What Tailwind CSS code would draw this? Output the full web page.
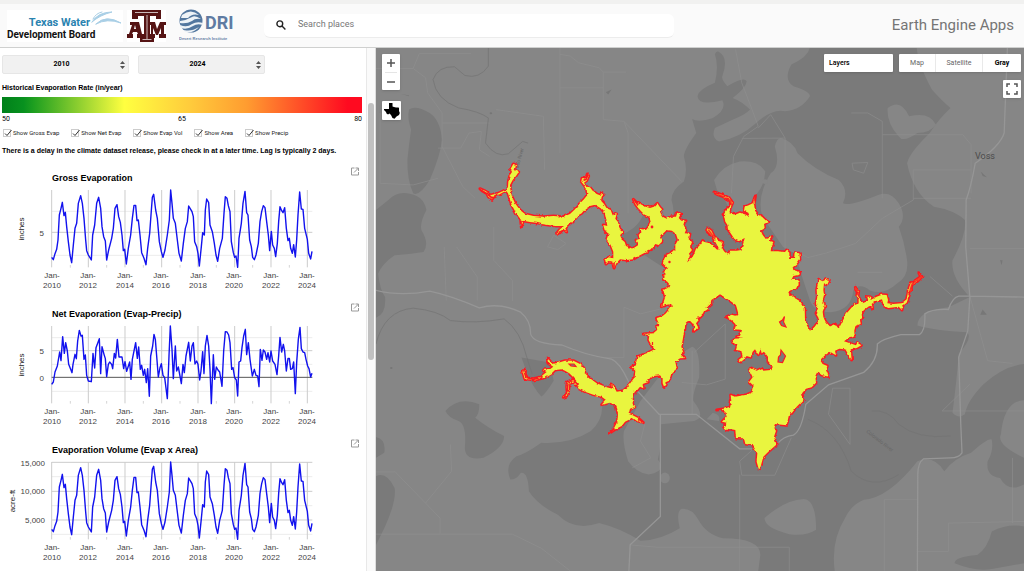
<!DOCTYPE html>
<html lang="en">
<head>
<meta charset="utf-8">
<title>Reservoir Evaporation</title>
<script src="https://cdn.jsdelivr.net/npm/@tailwindcss/browser@4"></script>
</head>
<body class="h-screen flex flex-col overflow-hidden bg-white font-[Roboto,sans-serif] text-black">
<header class="shrink-0 h-12 flex items-center bg-[#fafafa] border-t-4 border-b border-t-[#f1f1f0] border-b-[#cfd0cf]">
  <div class="flex items-center w-64 shrink-0 pl-[7px]">
    <svg class="w-[116px] h-8" viewBox="0 0 116 32" role="img" aria-label="Texas Water Development Board">
      <rect width="116" height="32" fill="#fff"/>
      <g fill="none" stroke="#a9cfe6" stroke-linecap="round"><path d="M85 12Q91 2 105 2Q93 5 85 12" fill="#a9cfe6"/><path d="M89 14Q99 4 114 13Q100 8 89 14" fill="#a9cfe6"/><path d="M86 9Q89 3 95 2" stroke-width="1"/></g>
      <text x="83" y="16" text-anchor="end" class="font-bold text-[11px] font-[Roboto,sans-serif]" fill="#2a83b0">Texas Water</text>
      <text x="0" y="28" class="font-bold text-[10px] font-[Roboto,sans-serif]" fill="#111">Development Board</text>
    </svg>
    <svg class="w-[39px] h-8 ml-1" viewBox="0 0 39 32" role="img" aria-label="Texas A&amp;M">
      <rect width="39" height="32" fill="#fff"/>
      <g fill="#551414"><path d="M5 0H34V9H29V6H23V27H27V32H13V27H17V6H11V9H5Z"/><path fill-rule="evenodd" d="M3 12H12L15 24H17V28H10V24H11L10 22H6L5 24H6V28H0V24H2L5 15H3ZM8 15L7 19H9Z"/><path d="M22 12H28L30 19L33 12H39V15H37V24H39V28H32V24H34V18L31 25H29L26 18V24H28V28H22V24H24V15H22Z"/></g>
      <path d="M8 2.500H31M20 5V29M15.500 29.500H24.500" stroke="#fff" stroke-width=".7" fill="none"/>
    </svg>
    <svg class="w-[56px] h-[34px] ml-[13px]" viewBox="0 0 56 34" role="img" aria-label="DRI Desert Research Institute">
      <circle cx="12" cy="12" r="11.500" fill="#53779f"/>
      <path d="M3 6Q12 -1 20 6Q13 4 9 9Q5 9 2 9ZM1 12Q8 11 13 8Q16 6 22 10Q16 9 13 12Q8 15 1 14ZM1 16Q8 19 13 15Q18 12 24 14V16Q18 14 14 17Q8 21 2 19ZM5 21Q12 23 20 18Q14 25 6 23Z" fill="#eef3f7"/>
      <text x="26" y="20" class="font-bold text-[18px] font-[Roboto,sans-serif]" fill="#5f7ba2">DRI</text>
      <text x="0" y="31" class="font-bold text-[4px] font-['Liberation_Sans',sans-serif]" fill="#6883a8">Desert Research Institute</text>
    </svg>
  </div>
  <label class="flex items-center h-6 ml-2 pl-3 w-[410px] rounded-md bg-white border-b border-[#ececec]">
    <svg class="size-[10px] shrink-0" viewBox="0 0 10 10" fill="none" stroke="#222" stroke-width="1.400"><circle cx="3.800" cy="3.800" r="2.900"/><path d="M6 6L9.400 9.400"/></svg>
    <input type="search" aria-label="Search places" placeholder="Search places" class="ml-3 w-full bg-transparent outline-none text-[9px] placeholder:text-[#777]">
  </label>
  <div class="ml-auto pr-[10px] text-[15px] text-[#757575]">Earth Engine Apps</div>
</header>

<main class="flex flex-1 min-h-0">
  <aside class="flex shrink-0 w-[376px] border-r border-[#ddd]">
    <div class="flex-1 min-w-0 overflow-hidden">
      <div class="px-[2px] pt-[7px] h-28">
        <div class="flex gap-[9px]">
          <div class="relative"><select aria-label="Start year" class="appearance-none block w-[127px] h-[19px] rounded-xs border border-[#e6e6e6] bg-[#f1f1f1] text-[7px] font-bold text-center [text-align-last:center] pr-2"><option>2010</option></select><svg class="absolute right-1 top-[6px] w-[5px] h-2 pointer-events-none" viewBox="0 0 5 8" fill="#555"><path d="M0 3L2.500 0L5 3ZM0 5L2.500 8L5 5Z"/></svg></div>
          <div class="relative"><select aria-label="End year" class="appearance-none block w-[127px] h-[19px] rounded-xs border border-[#e6e6e6] bg-[#f1f1f1] text-[7px] font-bold text-center [text-align-last:center] pr-2"><option>2024</option></select><svg class="absolute right-1 top-[6px] w-[5px] h-2 pointer-events-none" viewBox="0 0 5 8" fill="#555"><path d="M0 3L2.500 0L5 3ZM0 5L2.500 8L5 5Z"/></svg></div>
        </div>
        <h2 class="mt-[9px] text-[7px] leading-[10px] font-bold font-['Liberation_Sans',sans-serif]">Historical Evaporation Rate (in/year)</h2>
        <div class="mt-1 mr-[2px] h-4 bg-[linear-gradient(90deg,#00801a_0%,#08911f_6%,#20a020_9%,#ffff40_34%,#ffcc3c_52%,#ff9c30_68%,#ff0a20_96%,#ff0a20_100%)]"></div>
        <div class="mt-[2px] mr-[2px] flex justify-between text-[7px] leading-2"><span>50</span><span>65</span><span>80</span></div>
        <div class="mt-[5px] ml-px flex gap-3 text-[6px] leading-[10px] text-[#222] whitespace-nowrap">
          <label class="flex items-center gap-[2px]"><input type="checkbox" checked class="appearance-none size-2 border border-[#ccc]"><svg class="absolute size-[9px]" viewBox="0 0 9 9" fill="none" stroke="#333"><path d="M2 4.500L4 6.500L8.500 1"/></svg>Show Gross Evap</label>
          <label class="flex items-center gap-[2px]"><input type="checkbox" checked class="appearance-none size-2 border border-[#ccc]"><svg class="absolute size-[9px]" viewBox="0 0 9 9" fill="none" stroke="#333"><path d="M2 4.500L4 6.500L8.500 1"/></svg>Show Net Evap</label>
          <label class="flex items-center gap-[2px]"><input type="checkbox" checked class="appearance-none size-2 border border-[#ccc]"><svg class="absolute size-[9px]" viewBox="0 0 9 9" fill="none" stroke="#333"><path d="M2 4.500L4 6.500L8.500 1"/></svg>Show Evap Vol</label>
          <label class="flex items-center gap-[2px]"><input type="checkbox" checked class="appearance-none size-2 border border-[#ccc]"><svg class="absolute size-[9px]" viewBox="0 0 9 9" fill="none" stroke="#333"><path d="M2 4.500L4 6.500L8.500 1"/></svg>Show Area</label>
          <label class="flex items-center gap-[2px]"><input type="checkbox" checked class="appearance-none size-2 border border-[#ccc]"><svg class="absolute size-[9px]" viewBox="0 0 9 9" fill="none" stroke="#333"><path d="M2 4.500L4 6.500L8.500 1"/></svg>Show Precip</label>
        </div>
        <p class="mt-2 text-[7px] leading-[10px] font-bold whitespace-nowrap font-['Liberation_Sans',sans-serif]">There is a delay in the climate dataset release, please check in at a later time. Lag is typically 2 days.</p>
      </div>

      <svg class="block w-[366px] h-[136px] font-['Liberation_Sans',sans-serif]" viewBox="0 0 366 136" role="img" aria-label="Gross Evaporation">
        <defs>
          <g id="years" fill="none"><path d="M155 90V322M265 90V322M375 90V322M485 90V322M594 90V322M704 90V322M813 90V322M922 90V322" stroke="#ccc" stroke-width="3"/><path d="M211 315V323M320 315V323M430 315V323M540 315V323M649 315V323M758 315V323M868 315V323" stroke="#d5d5d5" stroke-width="3"/></g>
          <g id="ticks" class="text-[8px]" fill="#444" text-anchor="middle"><text x="52" y="118">Jan-</text><text x="52" y="128">2010</text><text x="88" y="118">Jan-</text><text x="88" y="128">2012</text><text x="125" y="118">Jan-</text><text x="125" y="128">2014</text><text x="161" y="118">Jan-</text><text x="161" y="128">2016</text><text x="198" y="118">Jan-</text><text x="198" y="128">2018</text><text x="234" y="118">Jan-</text><text x="234" y="128">2020</text><text x="271" y="118">Jan-</text><text x="271" y="128">2022</text><text x="307" y="118">Jan-</text><text x="307" y="128">2024</text></g>
          <g id="popout" fill="none" stroke="#999" stroke-width="1"><path d="M354.500 8H351.500V15H358.500V12M355.500 8H358.500V11M358.500 8L354 12.500"/></g>
          <polyline id="evap" fill="none" stroke="#1212ee" stroke-width="4.200" stroke-linejoin="round" points="155,292 160,299 165,281 170,268 174,240 178,165 183,145 187,127 192,167 196,157 200,200 205,245 210,285 215,308 220,255 225,205 230,190 235,130 242,107 247,130 252,175 257,240 260,272 265,285 270,293 274,300 278,225 284,195 290,130 296,112 302,145 306,200 311,230 316,243 320,300 326,270 335,235 340,205 345,145 351,134 356,170 361,187 366,225 370,272 374,268 379,312 385,265 392,225 397,175 402,136 407,136 411,182 415,180 420,225 425,278 432,295 438,314 443,265 449,220 453,165 457,112 461,103 467,150 472,175 478,245 484,275 489,292 495,270 502,225 508,180 512,90 516,130 520,175 526,190 532,240 537,280 544,303 550,250 556,205 562,185 566,138 572,148 576,155 580,170 584,245 590,260 594,280 598,318 604,260 608,218 613,225 616,150 620,117 626,128 630,195 637,215 643,250 648,285 653,304 659,265 667,235 672,160 676,110 681,115 685,137 690,155 694,245 700,278 704,292 708,288 713,322 717,235 724,190 729,130 735,94 740,158 744,165 749,240 754,260 758,292 763,299 768,285 775,250 780,185 785,155 790,137 795,143 800,185 805,225 809,272 814,214 818,255 823,265 827,290 832,250 836,185 840,140 845,152 849,158 854,143 859,205 864,242 868,235 872,265 877,280 881,254 886,291 890,240 894,165 899,96 904,147 909,148 914,205 922,238 926,280 932,297 936,274"/>
        </defs>
        <use href="#popout"/>
        <text x="52" y="21" class="text-[9px] font-bold">Gross Evaporation</text>
        <g transform="scale(.33333)"><path d="M155 154H937M155 286H937" stroke="#ececec" stroke-width="3"/><path d="M155 217H937" stroke="#ccc" stroke-width="3"/><use href="#years"/><use href="#evap"/></g>
        <text x="44" y="76" text-anchor="end" class="text-[8px]" fill="#444">5</text>
        <text transform="translate(24 69) rotate(-90)" text-anchor="middle" class="text-[8px]" fill="#222">inches</text>
        <use href="#ticks"/>
      </svg>
      <svg class="block w-[366px] h-[136px] font-['Liberation_Sans',sans-serif]" viewBox="0 0 366 136" role="img" aria-label="Net Evaporation">
        <use href="#popout"/>
        <text x="52" y="21" class="text-[9px] font-bold">Net Evaporation (Evap-Precip)</text>
        <g transform="scale(.33333)"><path d="M155 125H937M155 205H937M155 286H937" stroke="#ececec" stroke-width="3"/><path d="M155 164H937" stroke="#ccc" stroke-width="3"/><use href="#years"/><path d="M155 244H937" stroke="#555" stroke-width="3"/>
        <polyline fill="none" stroke="#1212ee" stroke-width="4.200" stroke-linejoin="round" points="155,265 160,258 165,228 172,210 179,168 183,194 188,122 193,172 197,140 202,165 206,205 212,220 216,230 219,205 225,175 229,188 233,135 238,103 243,120 247,118 252,190 256,177 260,238 265,255 274,257 279,172 284,216 288,155 298,128 302,233 306,152 312,175 316,188 320,242 325,205 329,198 335,205 338,218 343,172 347,186 352,130 357,183 366,183 371,218 375,197 380,226 389,198 393,250 397,190 407,140 412,187 416,153 421,220 425,208 430,238 434,220 439,260 443,218 448,301 452,180 458,150 462,115 466,130 470,180 475,243 480,215 484,203 489,238 494,245 502,308 507,180 511,90 516,160 520,248 526,150 530,225 535,213 540,240 544,263 549,205 553,230 558,180 566,139 571,195 576,150 580,140 585,204 590,195 594,205 599,252 603,225 608,167 612,233 616,150 621,118 626,150 630,220 634,323 640,176 644,250 649,213 654,222 659,228 666,271 671,165 676,107 681,108 686,117 690,140 695,220 699,215 704,245 709,252 713,300 717,198 722,195 726,155 731,120 736,100 740,176 745,140 750,190 757,240 763,220 768,238 773,240 777,272 781,160 786,193 790,162 795,168 800,190 804,170 809,198 813,165 818,195 825,205 831,236 836,180 840,124 845,168 850,145 854,165 859,225 864,187 868,187 872,220 877,218 881,198 886,293 890,200 895,130 900,94 904,158 909,168 914,170 918,190 923,210 927,218 932,243 936,232"/></g>
        <g class="text-[8px]" fill="#444" text-anchor="end"><text x="44" y="58">5</text><text x="44" y="85">0</text></g>
        <text transform="translate(24 69) rotate(-90)" text-anchor="middle" class="text-[8px]" fill="#222">inches</text>
        <use href="#ticks"/>
      </svg>
      <svg class="block w-[366px] h-[136px] font-['Liberation_Sans',sans-serif]" viewBox="0 0 366 136" role="img" aria-label="Evaporation Volume">
        <use href="#popout"/>
        <text x="52" y="21" class="text-[9px] font-bold">Evaporation Volume (Evap x Area)</text>
        <g transform="scale(.33333)"><path d="M155 134H937M155 221H937M155 307H937" stroke="#ececec" stroke-width="3"/><path d="M155 91H937M155 178H937M155 264H937" stroke="#ccc" stroke-width="3"/><use href="#years"/><use href="#evap"/></g>
        <g class="text-[8px]" fill="#444" text-anchor="end"><text x="45" y="34">15,000</text><text x="45" y="62">10,000</text><text x="45" y="91">5,000</text></g>
        <text transform="translate(15 69) rotate(-90)" text-anchor="middle" class="text-[8px]" fill="#222">acre-ft</text>
        <use href="#ticks"/>
      </svg>
    </div>
    <div class="w-[9px] shrink-0 border-l border-[#e8e8e8] bg-[#fafafa] pt-[55px] pl-px"><div class="w-[6px] h-[257px] rounded-full bg-[#c1c1c1]"></div></div>
  </aside>

  <section class="relative flex-1 min-w-0 bg-[#868686]" aria-label="Map">
    <svg class="block size-full" viewBox="376 48 648 523" preserveAspectRatio="xMinYMin slice">
      <g transform="translate(376 46) scale(.41327 .33482)">
        <g fill="#7a7a7a">
          <path d="M80 190Q95 175 130 200Q155 220 160 280Q155 330 130 400Q105 450 90 440Q75 400 76 340Q80 290 85 250Q75 215 80 190Z"/>
          <path d="M0 490L30 460Q50 435 75 440Q115 445 122 490Q105 530 110 550Q130 590 115 615Q90 620 45 625Q15 650 5 680Q10 730 22 750Q25 800 0 812Z"/>
          <path d="M1050 0Q1050 30 1005 55Q985 100 1010 120Q1050 135 1050 150Q1030 190 990 195Q960 185 920 230Q880 275 830 285Q810 275 820 245L860 222Q895 205 905 190Q885 165 863 155Q895 125 897 105Q890 90 850 120Q835 100 838 90Q850 50 840 30Q825 5 820 25Q830 60 820 110Q780 130 778 150Q780 180 838 162Q850 190 815 215Q780 230 765 218Q770 240 775 260Q745 310 745 330Q755 370 745 405Q715 430 715 460Q725 500 715 520L650 490Q640 540 600 560L575 560L590 640L650 625L700 665L740 700L720 800L690 980L600 1030L545 1055Q555 1110 520 1150Q470 1190 400 1185Q360 1220 340 1225Q310 1250 325 1295Q340 1295 350 1275Q368 1270 370 1330Q390 1370 440 1400Q480 1450 540 1425Q590 1440 640 1478Q690 1475 735 1440Q725 1390 740 1382Q765 1380 780 1415Q800 1460 840 1470Q930 1470 930 1520L925 1568H1110Q1100 1480 1135 1410Q1150 1370 1180 1355Q1240 1350 1310 1240Q1350 1220 1375 1270Q1400 1230 1440 1215Q1480 1170 1490 1175Q1495 1210 1480 1240Q1475 1285 1510 1290Q1530 1335 1568 1310V1230Q1500 1190 1512 1160Q1520 1060 1568 1058V950Q1520 955 1470 1010Q1430 1060 1425 1100Q1410 1115 1395 1095Q1405 1000 1410 920Q1445 870 1430 855Q1350 850 1310 835Q1310 790 1385 780L1437 750Q1390 690 1395 640Q1430 560 1425 520Q1400 490 1350 480Q1300 440 1285 350Q1290 320 1340 260Q1360 220 1390 185Q1370 165 1345 130Q1310 50 1308 0Z"/>
          <path d="M168 1090Q200 1045 250 1070Q250 1100 240 1110Q270 1140 310 1165Q310 1200 260 1230Q215 1240 215 1200Q220 1130 200 1120Q175 1110 168 1090Z"/>
          <path d="M0 1168Q25 1175 20 1215L0 1230ZM0 1285Q25 1270 45 1320Q50 1360 20 1440L0 1490ZM352 930L420 945L430 1000Q410 1040 400 1047Q380 1020 365 975ZM1568 1435Q1530 1425 1490 1450Q1480 1500 1455 1520Q1400 1525 1400 1545Q1450 1570 1490 1562L1568 1545Z"/>
        </g>
        <g fill="#868686">
          <path d="M980 275Q1010 285 1020 320Q1060 370 1120 400Q1145 430 1130 470Q1145 480 1215 445Q1245 430 1265 470Q1285 510 1265 540Q1280 590 1285 640Q1290 690 1260 710Q1230 745 1195 730Q1170 705 1155 730Q1150 790 1100 795Q1060 795 1050 760Q1030 690 1015 620L985 600L935 510Q920 450 955 380Q980 360 965 300Q970 275 980 275Z"/>
          <path d="M1238 185Q1270 155 1290 210Q1340 195 1355 235Q1340 260 1310 260Q1275 290 1265 270Q1235 230 1238 185ZM818 400Q840 355 880 345Q925 340 942 375Q940 420 915 450L900 500L860 510Q850 460 825 430ZM720 930L765 898Q785 905 782 990Q765 1040 768 1060Q800 1110 770 1120L690 1130Q690 1200 682 1235Q705 1270 660 1280Q630 1275 610 1240Q595 1180 600 1150L640 1060ZM940 1410Q990 1355 1035 1353Q1065 1355 1065 1445Q1040 1465 1000 1458Q940 1440 940 1410Z"/>
          <ellipse cx="699" cy="1290" rx="12" ry="16"/><ellipse cx="941" cy="405" rx="7" ry="7"/><path d="M815 1095Q835 1100 830 1120L800 1115Z"/>
        </g>
        <g fill="none" stroke="#929292" stroke-width="1" opacity=".55">
          <path vector-effect="non-scaling-stroke" d="M90 67L105 22H230M0 67H90L120 95L125 140L160 200V300L210 420L240 455M445 25L470 30L490 50L540 65L550 78H605M550 78V220L600 225M445 6V320M445 125H550M600 225L610 260V500M600 225L740 405M290 190L405 210L408 370M160 230H275M150 305H205L225 260L255 255L250 310L275 330M10 200V410L90 415L150 395M870 10L885 110L910 190L925 240L890 270L865 330L860 440M1150 200H1190L1225 225V455M1225 265H1420L1440 295V440M1152 350L1190 348L1180 380L1155 370ZM925 245L955 205L990 275L885 276M990 275V610L1020 615L1045 632L1090 618L1160 590L1225 515L1300 460V370H1440M1300 455H1440M1437 605H1568M1165 676H1225M1340 688L1395 747M1437 747L1480 940L1540 948M770 915L845 830V995L800 1012L740 1005M765 910V1100M600 780V930H555M600 780L640 800L690 785M1105 1022H1147V1190L1095 1100ZM1005 1170L965 1282H885L880 1240L910 1207M880 1280V1568M615 1490L680 1497H1000L1000 1568M45 1270L155 1410V1458H0M155 1458H330L400 1500L470 1568M1230 1355H1310M1310 1510H1385V1425L1568 1420M1230 1355V1568M285 540V640L330 700V762M165 600L170 760M195 600L245 690V760M0 1272H45M180 1190L183 1270L120 1365M1540 1230V1425M1620 1090L1370 1090L1437 1010"/>
          <path vector-effect="non-scaling-stroke" d="M415 600L430 565L460 590L440 608ZM650 1130L640 1180L665 1230L620 1260"/>
        </g>
        <g fill="none" stroke="#747474" opacity=".7"><path vector-effect="non-scaling-stroke" d="M272 6V60Q250 100 215 88L190 62Q150 60 138 100Q145 160 200 185Q250 195 272 215L265 290Q290 335 320 322L355 285L368 290M0 890Q20 790 90 783Q150 790 180 820Q240 830 310 815Q350 850 365 930L378 980M1200 1090Q1240 1085 1265 1130Q1310 1175 1390 1165M1045 1115Q1120 1150 1150 1270Q1200 1330 1265 1280"/></g>
        <g fill="#707070" opacity=".7"><path d="M556 138L570 130L562 145ZM1436 95Q1440 120 1455 125Q1440 120 1436 95ZM1462 803L1468 787L1478 803ZM1463 375L1478 392L1468 388ZM1510 640L1516 640L1514 655ZM62 143L80 148V150Z"/><circle cx="278" cy="201" r="3"/><circle cx="37" cy="962" r="3"/></g>
        <g fill="none" stroke="#969696" stroke-width="1.300">
          <path vector-effect="non-scaling-stroke" d="M0 730Q60 748 130 732Q180 745 250 782Q300 765 350 795Q375 820 374 860Q380 890 450 893Q510 925 570 935Q590 945 610 1000L685 1100H775L880 1203H910M688 1100V1405L615 1490L612 1568"/>
          <path vector-effect="non-scaling-stroke" d="M1528 0L1520 260Q1510 300 1450 350Q1440 420 1428 460L1427 600L1437 750L1432 850L1410 930L1415 1130L1418 1215Q1410 1230 1390 1230L1325 1233Q1311 1245 1311 1280L1310 1568M970 1190Q985 1165 1010 1162Q1030 1150 1040 1070L1095 1012L1180 975Q1215 940 1213 890Q1225 875 1270 862H1315Q1330 850 1328 800Q1345 785 1385 787Q1395 750 1410 747H1437L1568 750"/>
        </g>
      </g>
      <g class="text-[5px] font-[Roboto,sans-serif]" fill="#666"><text transform="translate(518 170) rotate(-75)">rado River</text><text transform="translate(866 432) rotate(38)">Colorado River</text></g>
      <text x="975" y="159" class="text-[9px] font-[Roboto,sans-serif]" fill="#4b4b4b">Voss</text>
      <defs>
        <!-- Breaks the shoreline up into small coves -->
        <filter id="shore" x="-5%" y="-5%" width="110%" height="110%" color-interpolation-filters="sRGB"><feTurbulence type="fractalNoise" baseFrequency=".25" numOctaves="2" seed="4"/><feDisplacementMap in="SourceGraphic" scale="3" xChannelSelector="R" yChannelSelector="G"/></filter>
        <g id="lake">
          <path transform="translate(470 150) scale(.33333)" d="M130 42L138 45 134 60 146 66 138 78 128 90 120 105 121 118 126 140 135 160 150 180 165 192 190 198 220 200 250 198 280 200 300 192 315 178 330 160 342 148 352 135 350 118 342 105 334 95 336 85 348 84 352 72 356 78 350 92 342 98 350 110 360 112 368 122 380 132 390 136 396 128 402 132 395 140 393 152 402 162 410 175 422 180 428 196 440 192 436 206 444 216 450 240 458 246 450 258 454 268 464 276 468 288 488 296 504 286 504 278 498 270 510 266 506 255 514 246 512 236 528 240 536 230 542 216 538 200 524 194 510 180 496 162 490 148 500 158 520 168 540 174 552 170 562 160 570 172 576 178 570 186 578 200 590 206 605 200 618 200 622 188 632 192 626 204 634 212 648 212 640 222 648 240 644 250 660 252 656 268 666 276 660 292 666 300 656 312 658 322 650 338 664 330 676 306 690 285 700 275 720 280 720 420 590 420 600 405 592 395 580 388 590 375 582 366 594 355 580 335 586 318 600 312 606 305 616 300 616 285 624 270 618 252 606 242 590 240 578 252 570 262 576 275 566 285 556 282 545 298 530 305 510 316 490 328 470 330 450 328 440 338 432 354 428 338 415 336 408 342 404 328 416 322 430 325 430 305 422 285 410 268 416 252 404 240 400 225 412 228 408 205 405 190 392 175 375 164 360 168 345 178 335 190 325 196 312 210 296 225 286 235 290 246 280 236 270 248 260 250 270 238 282 228 260 228 240 226 215 222 200 218 180 216 160 212 154 232 152 208 140 192 125 165 114 130 108 122 90 132 70 142 66 148 55 140 50 130 36 122 30 116 48 124 60 136 85 130 105 120 114 112 115 95 120 75 126 66 122 56Z"/>
          <path transform="translate(640 180) scale(.33333)" d="M140 250L160 228 168 206 180 196 188 182 198 192 212 192 226 204 232 210 236 204 226 186 216 168 200 150 204 144 214 152 222 168 236 182 248 186 244 200 252 214 264 224 270 212 290 212 304 210 310 190 314 174 296 184 284 178 272 160 264 148 262 134 256 125 252 105 256 92 264 84 274 72 268 60 250 50 230 42 222 36 245 44 268 54 278 68 270 86 268 100 285 104 300 98 318 104 330 112 325 98 312 92 314 80 326 76 338 70 346 48 342 72 345 92 354 104 366 110 376 120 384 126 372 132 374 145 362 152 368 165 378 178 396 170 388 182 400 186 394 200 392 214 410 214 435 216 440 210 448 218 448 234 462 234 464 218 478 220 480 238 468 254 458 262 460 270 480 276 478 284 460 288 454 300 474 314 468 326 448 332 444 340 456 352 470 360 480 366 492 382 494 410 500 450 300 450 310 440 290 442 286 432 278 424 260 410 275 404 296 410 296 390 285 368 270 360 255 352 240 342 230 350 210 352 208 362 214 374 200 378 202 390 190 388 190 402 180 412 168 404 176 420 168 430 174 442 160 436 160 425 148 418 136 430 134 450 52 450 50 440 60 438 50 416 68 408 78 400 90 385 100 374 84 372 64 380 76 370 82 355 74 345 78 336 66 330 82 325 90 310 88 292 70 286 86 280 84 265 68 250 74 240 78 226 100 215 130 210 150 225Z"/>
          <path transform="translate(640 180) scale(.33333)" d="M510 470L520 446 532 430 536 415 528 400 534 385 528 372 532 350 530 330 534 310 536 298 548 304 560 298 568 300 562 314 552 310 550 330 552 345 548 360 554 378 548 395 550 410 556 425 570 440 585 432 590 444 596 446 610 430 620 408 636 396 644 380 656 370 656 358 650 348 652 338 646 322 656 334 654 348 662 362 668 370 685 362 682 350 690 350 692 360 710 350 726 344 740 345 744 360 742 370 760 372 785 370 800 358 805 330 812 310 828 300 842 290 836 278 846 290 832 304 816 314 808 345 800 368 788 378 786 390 776 380 745 384 732 378 726 358 705 364 695 372 698 384 688 378 672 390 664 400 666 412 660 416 662 432 645 438 640 470Z"/>
          <path transform="translate(700 280) scale(.33333)" d="M0 0L295 0 296 16 270 30 264 38 280 52 300 64 314 85 314 110 320 135 330 152 345 140 356 125 370 118 390 140 405 132 416 146 440 100 464 72 485 90 484 112 470 130 462 150 464 165 450 170 432 184 450 190 468 196 472 188 484 196 470 204 452 208 455 240 446 225 436 208 418 206 405 212 408 226 390 215 376 225 360 240 368 252 382 258 378 270 386 290 365 285 352 275 346 288 348 308 335 322 318 326 306 340 310 360 290 380 275 400 268 400 260 436 225 432 220 445 228 452 222 470 228 490 228 495 205 515 190 530 180 566 176 566 170 545 172 520 158 495 136 492 132 475 108 474 106 450 86 446 84 450 70 440 80 428 66 425 80 410 76 396 64 388 50 390 72 386 90 380 94 364 92 345 105 350 140 344 158 336 162 318 148 305 158 292 148 270 152 264 170 272 185 265 190 272 212 270 218 262 204 246 204 230 192 215 185 220 182 208 175 224 165 208 158 215 152 232 140 228 130 240 122 246 116 240 128 230 124 212 108 210 112 196 96 186 102 176 126 175 110 170 120 168 126 150 104 148 110 130 100 118 80 112 104 108 116 104 108 75 90 62 60 42 34 46 0 50Z"/>
          <path transform="translate(510 290) scale(.33333)" d="M460 0L466 20 458 45 490 42 480 62 465 78 440 84 450 98 444 118 430 130 400 132 418 136 416 150 424 165 434 178 410 190 382 200 378 225 364 230 376 242 374 262 364 275 352 292 340 302 320 305 312 290 302 282 308 296 290 292 260 280 240 265 225 250 222 235 210 222 190 212 165 212 145 218 128 222 112 204 114 220 130 230 120 238 98 240 110 246 90 262 70 266 52 264 46 252 46 240 38 244 44 266 72 270 100 264 125 250 135 240 155 238 165 242 178 250 190 262 202 276 206 292 196 280 186 270 172 276 170 290 172 305 160 322 170 318 176 300 178 282 190 275 206 296 225 305 250 314 275 320 288 330 275 344 300 338 316 345 320 352 324 372 322 395 312 415 298 430 316 418 335 408 345 395 360 388 365 382 380 392 400 398 384 384 368 376 356 372 360 356 376 350 368 345 368 325 374 305 382 300 390 290 400 295 398 282 415 276 412 268 430 258 450 256 458 265 458 280 463 292 468 276 478 272 484 250 500 236 496 215 510 205 525 204 514 192 520 188 514 170 518 150 522 125 525 95 540 92 555 108 550 124 565 115 556 100 558 82 572 76 575 68 590 60 584 45 600 48 604 30 612 25 630 12 630 0Z"/>
        </g>
      </defs>
      <g filter="url(#shore)">
      <use href="#lake" fill="none" stroke="#fb1a22" stroke-width="9" stroke-linejoin="round"/>
      <use href="#lake" fill="#e9f53f"/>
      <g fill="none" stroke="#fb1a22" stroke-width="5">
        <path transform="translate(640 180) scale(.33333)" d="M806 345L812 325 817 310 830 301 844 290 838 280M222 38L250 50 272 62 274 76M346 48L342 72M204 148L226 178M648 324L654 346"/>
        <path transform="translate(510 290) scale(.33333)" d="M42 242L48 262 70 268 98 260M112 206L116 222M164 320L172 300 174 280 186 272M384 386L398 396M300 428L314 416"/>
        <path transform="translate(470 150) scale(.33333)" d="M30 118L52 132 66 144 84 132M354 74L348 88 338 92M492 150L506 168M153 212V230M264 248L278 242M432 334V352"/>
      </g>
      </g>
      <g fill="#7a7a7a" stroke="#fb1a22" stroke-width="1.200"><path d="M784.500 316.500L783.500 322 786 327 781.500 325.500 779.500 322 782.500 320ZM781 350L785.500 356 782.500 362.500 778 362 778.500 357 780.500 355ZM569 364L574 364 576 366.500 571 366ZM652.500 342V345"/><circle cx="652" cy="227" r=".8"/><circle cx="669.500" cy="262" r=".6"/></g>
    </svg>

    <div class="absolute left-[6px] top-[6px] flex flex-col w-[18px] bg-white rounded-[1px] shadow-sm">
      <button aria-label="Zoom in" class="h-[18px] grid place-items-center"><svg class="size-2" viewBox="0 0 8 8" stroke="#555" stroke-width="1.500"><path d="M0 4H8M4 0V8"/></svg></button>
      <span class="mx-[3px] h-px bg-[#e5e5e5]"></span>
      <button aria-label="Zoom out" class="h-[17px] grid place-items-center"><svg class="size-2" viewBox="0 0 8 8" stroke="#555" stroke-width="1.500"><path d="M0 4H8"/></svg></button>
    </div>
    <button aria-label="Zoom to Texas" class="absolute left-[6px] top-[53px] w-[19px] h-[19px] grid place-items-center bg-white rounded-[1px] shadow-sm"><svg class="size-4" viewBox="0 0 16 16"><path d="M5 0H8.500V3.500L10 4L12 4.500L14.500 4.500L15 5V8L15.800 10L15 12L12.500 13.500L10.500 15.800L8.500 15L7 12L5.500 10.500L4 11.500L2.500 10.500L2 9L0 7V6H5Z"/></svg></button>
    <div class="absolute right-[3px] top-[6px] flex gap-[6px] h-[18px] text-[7px]">
      <button class="w-[69px] pl-[5px] text-left bg-white rounded-[1px] font-medium shadow-sm">Layers</button>
      <div class="flex bg-white rounded-[1px] text-[#666] shadow-sm">
        <button class="w-9">Map</button><button class="w-12 border-x border-[#e9e9e9]">Satellite</button><button class="w-[38px] font-bold text-black">Gray</button>
      </div>
    </div>
    <button aria-label="Full screen" class="absolute right-[3px] top-8 size-[18px] grid place-items-center bg-white rounded-[1px] shadow-sm"><svg class="size-3" viewBox="0 0 12 12" fill="none" stroke="#555" stroke-width="1.500"><path d="M1 4V1H4M8 1H11V4M11 8V11H8M4 11H1V8"/></svg></button>
  </section>
</main>
</body>
</html>
